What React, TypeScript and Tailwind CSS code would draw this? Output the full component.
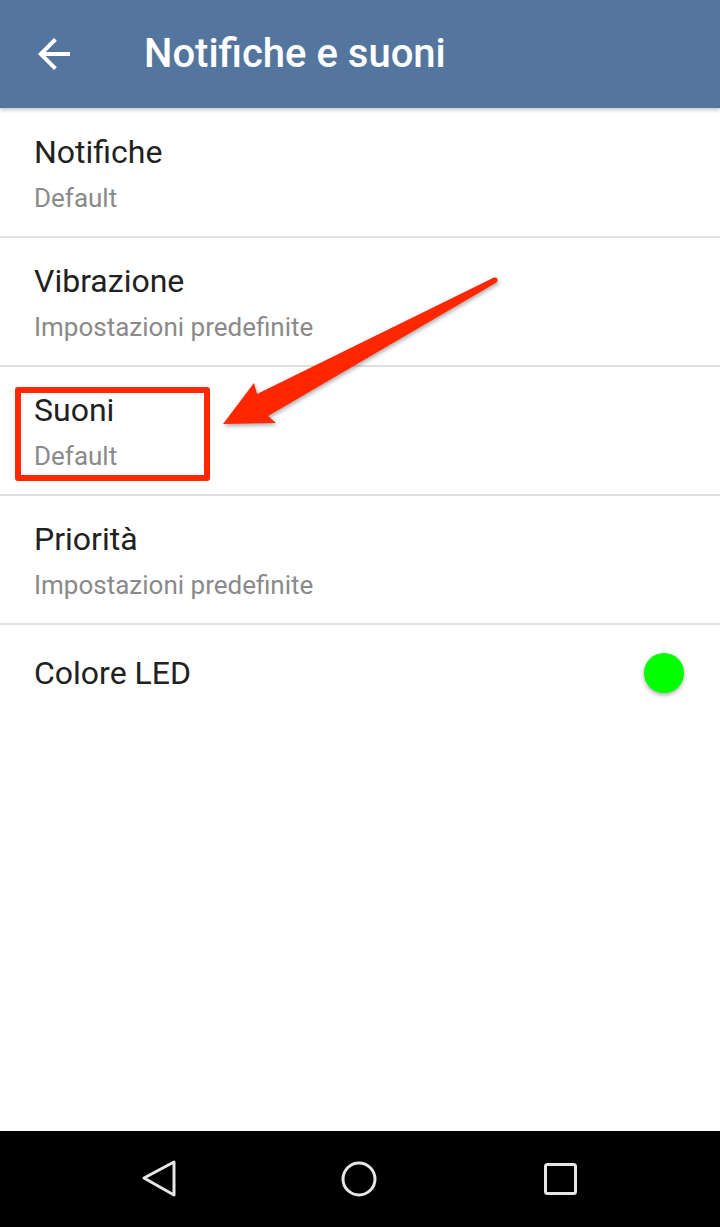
const rows = [
  { title: "Notifiche", subtitle: "Default" },
  { title: "Vibrazione", subtitle: "Impostazioni predefinite" },
  { title: "Suoni", subtitle: "Default", highlighted: true },
  { title: "Priorità", subtitle: "Impostazioni predefinite" },
];

function BackIcon() {
  return (
    <svg viewBox="0 0 24 24" className="h-[48px] w-[48px]" fill="white">
      <path d="M20 11H7.83l5.59-5.59L12 4l-8 8 8 8 1.41-1.41L7.83 13H20v-2z" />
    </svg>
  );
}

function SettingRow({ title, subtitle, highlighted }: { title: string; subtitle: string; highlighted?: boolean }) {
  return (
    <div className="relative h-[129px] border-b-2 border-[#e0e0e0] px-[34px]">
      {highlighted && (
        <div className="absolute left-[15px] top-[20px] h-[94px] w-[195px] rounded-[3px] border-[6px] border-[#ff2600]" />
      )}
      <div className="pt-[27px] text-[32px] leading-[32px] text-[#212121]">{title}</div>
      <div className="mt-[17px] text-[26px] leading-[26px] text-[#8a8a8a]">{subtitle}</div>
    </div>
  );
}

function Annotation() {
  return (
    <svg
      className="pointer-events-none absolute left-0 top-0 h-[1227px] w-[720px] drop-shadow-[1px_2px_2px_rgba(0,0,0,0.35)]"
      viewBox="0 0 720 1227"
    >
      <polygon
        fill="#ff2600"
        points="494,277.6 257,394 254,383 223,424 276,423 268,416 496.4,282.4"
      />
      <circle cx="495" cy="280" r="2.6" fill="#ff2600" />
    </svg>
  );
}

export default function App() {
  return (
    <div
      className="relative flex h-[1227px] w-[720px] flex-col overflow-hidden bg-white"
      style={{ fontFamily: "Roboto, 'Noto Sans', sans-serif" }}
    >
      <header className="relative z-10 flex h-[108px] shrink-0 items-center bg-[#54769e] shadow-[0_2px_4px_rgba(0,0,0,0.22)]">
        <div className="ml-[30px]">
          <BackIcon />
        </div>
        <h1 className="ml-[66px] text-[40px] font-medium leading-[40px] text-white">Notifiche e suoni</h1>
      </header>

      <main className="flex-1 pt-[1px]">
        {rows.map((row) => (
          <SettingRow key={row.title} {...row} />
        ))}
        <div className="flex h-[96px] items-center justify-between pl-[34px] pr-[36px]">
          <span className="text-[32px] leading-[32px] text-[#212121]">Colore LED</span>
          <span className="h-[40px] w-[40px] rounded-full bg-[#00ff00] shadow-[0_2px_4px_rgba(0,0,0,0.35)]" />
        </div>
      </main>

      <nav className="flex h-[96px] shrink-0 items-center bg-black">
        <svg viewBox="0 0 720 96" className="h-[96px] w-[720px]" fill="none" stroke="#e6e6e6" strokeWidth="3">
          <path d="M174 31 L144 47 L174 64 Z" strokeLinejoin="round" />
          <circle cx="359" cy="48" r="16" />
          <rect x="545.5" y="33.5" width="30" height="29" rx="2" />
        </svg>
      </nav>

      <Annotation />
    </div>
  );
}
